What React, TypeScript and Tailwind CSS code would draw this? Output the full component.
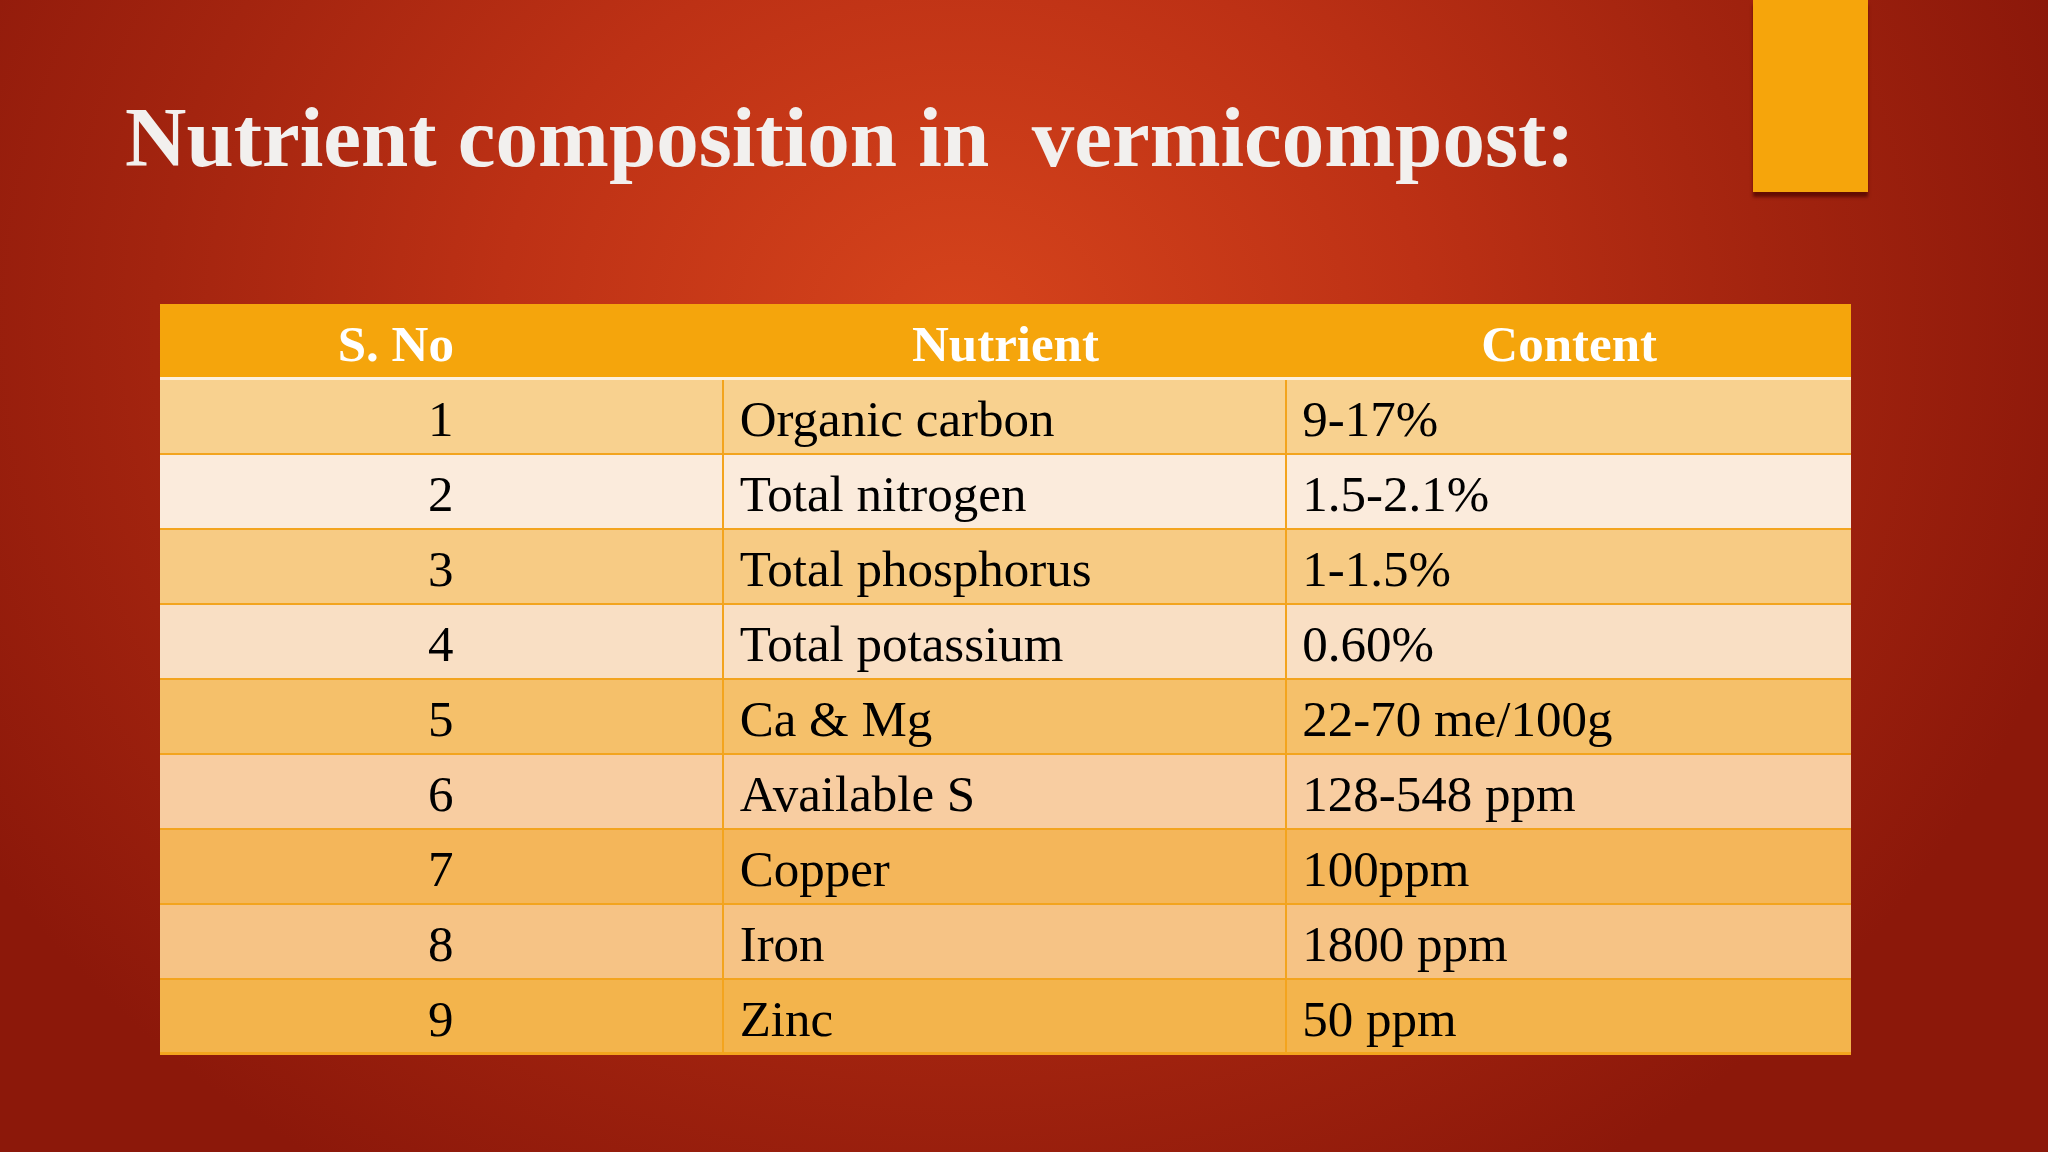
import React from 'react';

type Row = { no: string; nutrient: string; content: string; bg: string };

const ROWS: Row[] = [
  { no: '1', nutrient: 'Organic carbon', content: '9-17%', bg: 'bg-[#f8d18f]' },
  { no: '2', nutrient: 'Total nitrogen', content: '1.5-2.1%', bg: 'bg-[#fbebdc]' },
  { no: '3', nutrient: 'Total phosphorus', content: '1-1.5%', bg: 'bg-[#f7cb84]' },
  { no: '4', nutrient: 'Total potassium', content: '0.60%', bg: 'bg-[#f9dfc4]' },
  { no: '5', nutrient: 'Ca & Mg', content: '22-70 me/100g', bg: 'bg-[#f5c06a]' },
  { no: '6', nutrient: 'Available S', content: '128-548 ppm', bg: 'bg-[#f8cda1]' },
  { no: '7', nutrient: 'Copper', content: '100ppm', bg: 'bg-[#f4b65a]' },
  { no: '8', nutrient: 'Iron', content: '1800 ppm', bg: 'bg-[#f6c385]' },
  { no: '9', nutrient: 'Zinc', content: '50 ppm', bg: 'bg-[#f3b44c]' },
];

const serif = "font-['Liberation_Serif','Times_New_Roman',serif]";

const App: React.FC = () => {
  return (
    <div
      className={`relative w-[2048px] h-[1152px] overflow-hidden bg-[radial-gradient(ellipse_1150px_1000px_at_960px_330px,#d6441c_0%,#bd3115_40%,#a3240f_70%,#8c180a_100%)] ${serif}`}
    >
      {/* accent block top right */}
      <div className="absolute left-[1753px] top-0 w-[115px] h-[192px] bg-[#f6a50b] shadow-[0_5px_3px_rgba(80,5,0,0.75)]" />

      <div className="flex flex-col pl-[125px] pt-[95px]">
        <h1 className="text-[85px] leading-none font-bold text-[#f2f0ee] whitespace-pre">
          Nutrient composition in  vermicompost:
        </h1>

        {/* Table */}
        <div className="ml-[35px] mt-[124px] w-[1691px] flex flex-col">
          <div className="grid grid-cols-3 h-[76px] pt-[8px] bg-[#f5a50c] border-b-[3px] border-[#fdf1df] text-white font-bold text-[51px] leading-none">
            <div className="flex items-center justify-center pr-[92px]">S. No</div>
            <div className="flex items-center justify-center">Nutrient</div>
            <div className="flex items-center justify-center">Content</div>
          </div>
          {ROWS.map((r, i) => (
            <div
              key={r.no}
              className={`grid grid-cols-3 h-[75px] ${r.bg} text-black text-[51px] leading-none ${
                i < ROWS.length - 1 ? 'border-b-2' : 'border-b-[3px]'
              } border-[#f3a41e]`}
            >
              <div className="flex items-center justify-center pt-[6px] border-r-2 border-[#f3a41e]">{r.no}</div>
              <div className="flex items-center pl-[16px] pt-[6px] border-r-2 border-[#f3a41e]">{r.nutrient}</div>
              <div className="flex items-center pl-[15px] pt-[6px]">{r.content}</div>
            </div>
          ))}
        </div>
      </div>
    </div>
  );
};

export default App;
